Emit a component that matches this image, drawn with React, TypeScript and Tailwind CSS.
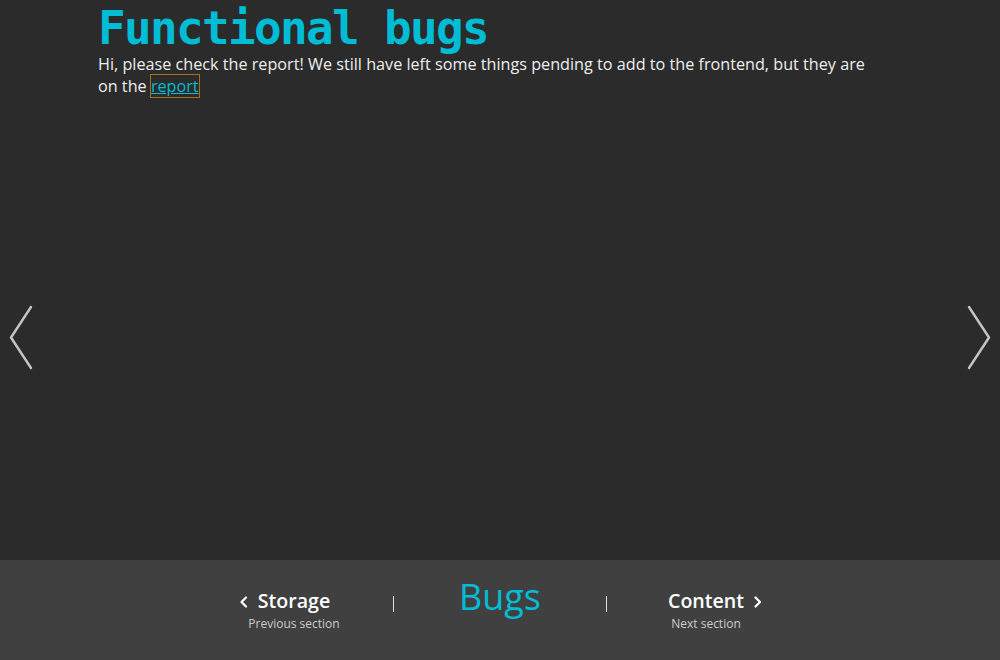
import React from "react";

function SideArrow({ dir }: { dir: "left" | "right" }) {
	const pts = dir === "left" ? "22,3 2,33.5 22,64" : "2,3 22,33.5 2,64";
	return (
		<svg width="24" height="67" viewBox="0 0 24 67" fill="none">
			<polyline points={pts} stroke="#c4c4c4" strokeWidth="2.4" strokeLinecap="round" strokeLinejoin="round" />
		</svg>
	);
}

function Chevron({ dir }: { dir: "left" | "right" }) {
	const pts = dir === "left" ? "6,1.5 1.5,6 6,10.5" : "1.5,1.5 6,6 1.5,10.5";
	return (
		<svg width="8" height="12" viewBox="0 0 8 12" fill="none">
			<polyline points={pts} stroke="#ffffff" strokeWidth="2.2" strokeLinecap="round" strokeLinejoin="round" />
		</svg>
	);
}

export default function App() {
	return (
		<div className="w-[1000px] h-[660px] flex flex-col bg-[#2b2b2b] font-['Open_Sans',sans-serif] overflow-hidden">
			<main className="relative h-[560px] pl-[98px]">
				<h1 className="pt-[3px] font-['DejaVu_Sans_Mono',monospace] font-bold text-[46px] leading-[50px] tracking-[-1.7px] text-[#00bcd4]">
					Functional bugs
				</h1>
				<p className="w-[785px] text-[16.2px] leading-[22px] text-[#eeeeee]">
					Hi, please check the report! We still have left some things pending to add to the frontend, but they are on the{" "}
					<a href="#" className="text-[#00bcd4] underline outline-[1.5px] outline-solid outline-[#a0741e]">
						report
					</a>
				</p>

				<button className="absolute left-[9px] top-[304px]">
					<SideArrow dir="left" />
				</button>
				<button className="absolute left-[967px] top-[304px]">
					<SideArrow dir="right" />
				</button>
			</main>

			<footer className="h-[100px] bg-[#404040] flex pl-[196px]">
				<div className="w-[196px] pt-[27px] text-center">
					<div className="relative inline-block text-[19.6px] leading-[28px] font-semibold text-white">
						<span className="absolute left-[-18px] top-[9px]">
							<Chevron dir="left" />
						</span>
						Storage
					</div>
					<div className="mt-[1px] text-[12px] leading-[16px] text-[#cccccc]">Previous section</div>
				</div>
				<div className="w-[10px] pt-[36px] pl-[1px]">
					<div className="w-px h-4 bg-[#e0e0e0]" />
				</div>
				<div className="w-[196px] pt-[17px] text-center text-[36px] leading-[40px] text-[#00bcd4]">Bugs</div>
				<div className="w-[10px] pt-[36px] pl-[8px]">
					<div className="w-px h-4 bg-[#e0e0e0]" />
				</div>
				<div className="w-[196px] pt-[27px] text-center">
					<div className="relative inline-block text-[19.6px] leading-[28px] font-semibold text-white">
						Content
						<span className="absolute right-[-18px] top-[9px]">
							<Chevron dir="right" />
						</span>
					</div>
					<div className="mt-[1px] text-[12px] leading-[16px] text-[#cccccc]">Next section</div>
				</div>
			</footer>
		</div>
	);
}
